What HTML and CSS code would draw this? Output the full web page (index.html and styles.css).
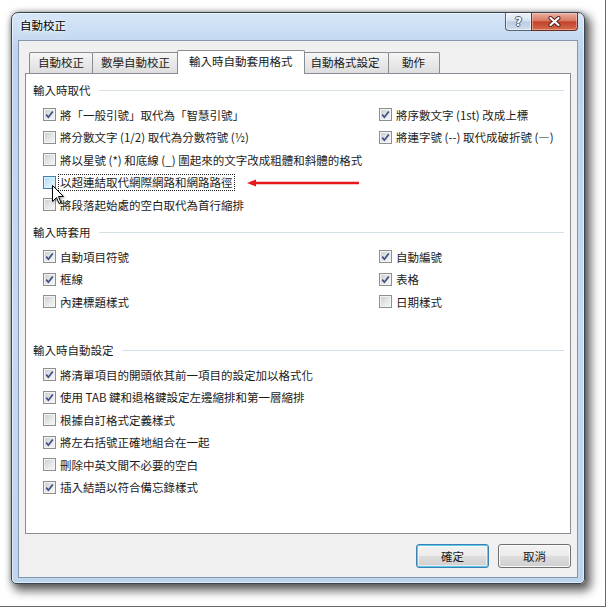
FILE: index.html
```html
<!DOCTYPE html>
<html lang="zh-Hant">
<head>
  <meta charset="UTF-8">
  <title>自動校正</title>
  <link rel="stylesheet" href="styles.css">
</head>
<body>

<div class="shot">
  <div class="window">
    <div class="titlebar">
      <span class="title">自動校正</span>
      <div class="caption">
        <span class="cap-btn help">?</span>
        <span class="cap-btn close">
          <svg width="13" height="11" viewBox="0 0 13 11">
            <path d="M2.5 2 L10.5 9 M10.5 2 L2.5 9" stroke="#4a2018" stroke-width="4" stroke-linecap="round"/>
            <path d="M2.5 2 L10.5 9 M10.5 2 L2.5 9" stroke="#fff" stroke-width="2.2" stroke-linecap="round"/>
          </svg>
        </span>
      </div>
    </div>

    <div class="client">
      <div class="tabs">
        <span class="tab">自動校正</span>
        <span class="tab">數學自動校正</span>
        <span class="tab active">輸入時自動套用格式</span>
        <span class="tab">自動格式設定</span>
        <span class="tab">動作</span>
      </div>

      <div class="panel">
        <div class="section">
          <div class="section-head"><span>輸入時取代</span></div>
          <div class="options">
            <label class="opt"><span class="cb on"><svg width="11" height="11" viewBox="0 0 11 11"><path d="M2.2 5.6 L4.4 8.2 L8.8 2.4" fill="none" stroke="#3d4f86" stroke-width="1.7"/></svg></span>將「一般引號」取代為「智慧引號」</label>
            <label class="opt"><span class="cb on"><svg width="11" height="11" viewBox="0 0 11 11"><path d="M2.2 5.6 L4.4 8.2 L8.8 2.4" fill="none" stroke="#3d4f86" stroke-width="1.7"/></svg></span>將序數文字 (1st) 改成上標</label>
            <label class="opt"><span class="cb"></span>將分數文字 (1/2) 取代為分數符號 (½)</label>
            <label class="opt"><span class="cb on"><svg width="11" height="11" viewBox="0 0 11 11"><path d="M2.2 5.6 L4.4 8.2 L8.8 2.4" fill="none" stroke="#3d4f86" stroke-width="1.7"/></svg></span>將連字號 (--) 取代成破折號 (—)</label>
            <label class="opt wide"><span class="cb"></span>將以星號 (*) 和底線 (_) 圍起來的文字改成粗體和斜體的格式</label>
            <label class="opt wide"><span class="cb hover"></span><span class="focus">以超連結取代網際網路和網路路徑</span></label>
            <label class="opt wide"><span class="cb"></span>將段落起始處的空白取代為首行縮排</label>
          </div>
        </div>

        <div class="section">
          <div class="section-head"><span>輸入時套用</span></div>
          <div class="options">
            <label class="opt"><span class="cb on"><svg width="11" height="11" viewBox="0 0 11 11"><path d="M2.2 5.6 L4.4 8.2 L8.8 2.4" fill="none" stroke="#3d4f86" stroke-width="1.7"/></svg></span>自動項目符號</label>
            <label class="opt"><span class="cb on"><svg width="11" height="11" viewBox="0 0 11 11"><path d="M2.2 5.6 L4.4 8.2 L8.8 2.4" fill="none" stroke="#3d4f86" stroke-width="1.7"/></svg></span>自動編號</label>
            <label class="opt"><span class="cb on"><svg width="11" height="11" viewBox="0 0 11 11"><path d="M2.2 5.6 L4.4 8.2 L8.8 2.4" fill="none" stroke="#3d4f86" stroke-width="1.7"/></svg></span>框線</label>
            <label class="opt"><span class="cb on"><svg width="11" height="11" viewBox="0 0 11 11"><path d="M2.2 5.6 L4.4 8.2 L8.8 2.4" fill="none" stroke="#3d4f86" stroke-width="1.7"/></svg></span>表格</label>
            <label class="opt"><span class="cb"></span>內建標題樣式</label>
            <label class="opt"><span class="cb"></span>日期樣式</label>
          </div>
        </div>

        <div class="section later">
          <div class="section-head"><span>輸入時自動設定</span></div>
          <div class="options">
            <label class="opt wide"><span class="cb on"><svg width="11" height="11" viewBox="0 0 11 11"><path d="M2.2 5.6 L4.4 8.2 L8.8 2.4" fill="none" stroke="#3d4f86" stroke-width="1.7"/></svg></span>將清單項目的開頭依其前一項目的設定加以格式化</label>
            <label class="opt wide"><span class="cb on"><svg width="11" height="11" viewBox="0 0 11 11"><path d="M2.2 5.6 L4.4 8.2 L8.8 2.4" fill="none" stroke="#3d4f86" stroke-width="1.7"/></svg></span>使用 TAB 鍵和退格鍵設定左邊縮排和第一層縮排</label>
            <label class="opt wide"><span class="cb"></span>根據自訂格式定義樣式</label>
            <label class="opt wide"><span class="cb on"><svg width="11" height="11" viewBox="0 0 11 11"><path d="M2.2 5.6 L4.4 8.2 L8.8 2.4" fill="none" stroke="#3d4f86" stroke-width="1.7"/></svg></span>將左右括號正確地組合在一起</label>
            <label class="opt wide"><span class="cb"></span>刪除中英文間不必要的空白</label>
            <label class="opt wide"><span class="cb on"><svg width="11" height="11" viewBox="0 0 11 11"><path d="M2.2 5.6 L4.4 8.2 L8.8 2.4" fill="none" stroke="#3d4f86" stroke-width="1.7"/></svg></span>插入結語以符合備忘錄樣式</label>
          </div>
        </div>
      </div>

      <div class="btn-row">
        <button class="btn default">確定</button>
        <button class="btn">取消</button>
      </div>
    </div>
  </div>

  <!-- annotation: red arrow -->
  <svg class="arrow" width="116" height="10" viewBox="0 0 116 10">
    <polygon points="1,5 10,1.5 10,8.5" fill="#e8161d"/>
    <line x1="9" y1="5" x2="113" y2="5" stroke="#e8161d" stroke-width="2.4"/>
  </svg>

  <!-- mouse pointer -->
  <svg class="pointer" width="13" height="20" viewBox="0 0 13 20">
    <path d="M0.5 0.5 V16.5 L4.5 12.5 L7 18.5 L9 17.5 L6.5 11.5 H11.5 Z" fill="#fff" stroke="#000" stroke-width="1" stroke-linejoin="miter"/>
  </svg>
</div>

</body>
</html>
```

FILE: styles.css
```css
* {
  margin: 0;
  padding: 0;
  box-sizing: border-box;
}

body {
  width: 609px;
  height: 609px;
  overflow: hidden;
  background-color: #fff;
  font-family: "Noto Sans CJK TC", "Noto Sans", sans-serif;
  font-size: 11.5px;
  color: #1b1b1b;
}

/* picture frame with its own edge line */
.shot {
  position: relative;
  width: 606px;
  height: 607px;
  padding: 12px 0 0 11px;
  border-right: 1px solid #6a6a6a;
  border-bottom: 1px solid #6a6a6a;
}

/* Aero window */
.window {
  width: 574px;
  height: 572px;
  border: 1px solid #3b4552;
  border-radius: 7px 7px 5px 5px;
  background: linear-gradient(180deg, #d6e6f7 0%, #bcd4ee 7%, #c6dbf1 55%, #bed5ee 100%);
  box-shadow: inset 0 0 0 1px rgba(255, 255, 255, 0.55), 4px 5px 10px 2px rgba(0, 0, 0, 0.6), 0 0 5px rgba(0, 0, 0, 0.3);
  display: flex;
  flex-direction: column;
  align-items: center;
}

.titlebar {
  width: 100%;
  height: 27px;
  display: flex;
  align-items: flex-start;
  padding: 0 6px 0 8px;
}

.title {
  line-height: 24px;
  color: #000;
  text-shadow: 0 0 6px #fff, 0 0 3px #fff;
}

.caption {
  margin-left: auto;
  display: flex;
}

.cap-btn {
  height: 18px;
  display: flex;
  align-items: center;
  justify-content: center;
  border: 1px solid rgba(40, 52, 70, 0.75);
  border-top: none;
}

.help {
  width: 26px;
  border-right: none;
  border-radius: 0 0 0 4px;
  background: linear-gradient(180deg, #eef3f9 0%, #d8e3ef 45%, #bccde1 52%, #cfdced 100%);
  box-shadow: inset 0 0 0 1px rgba(255, 255, 255, 0.6);
  font-family: "DejaVu Sans", sans-serif;
  font-weight: bold;
  font-size: 12px;
  color: #fff;
  text-shadow: -1px 0 #4c5a6c, 1px 0 #4c5a6c, 0 -1px #4c5a6c, 0 1px #4c5a6c;
}

.close {
  width: 47px;
  border-color: #6a2b22;
  border-radius: 0 0 4px 0;
  background: linear-gradient(180deg, #eab0a2 0%, #da7a63 45%, #c4432d 52%, #d36a4c 100%);
  box-shadow: inset 0 0 0 1px rgba(255, 220, 210, 0.45);
}

/* dialog client area */
.client {
  width: 560px;
  height: 538px;
  background-color: #f0f0f0;
  border: 1px solid #8597ae;
  padding: 9px 6px 9px 6px;
  display: flex;
  flex-direction: column;
}

.tabs {
  height: 23px;
  display: flex;
  align-items: flex-end;
  padding-left: 4px;
}

.tab {
  height: 21px;
  line-height: 19px;
  padding: 0 8px;
  min-width: 52px;
  text-align: center;
  border: 1px solid #898c95;
  border-bottom: none;
  border-radius: 2px 2px 0 0;
  background: linear-gradient(180deg, #f5f5f5 0%, #e9e9e9 50%, #dedede 100%);
  white-space: nowrap;
}

.tab + .tab {
  margin-left: -1px;
}

.tab.active {
  position: relative;
  z-index: 2;
  height: 24px;
  line-height: 21px;
  margin: 0 -2px -1px -2px;
  padding: 0 11px;
  background: #fff;
}

.panel {
  height: 461px;
  background-color: #fff;
  border: 1px solid #898c95;
  padding: 7px 6px 0 7px;
}

.section + .section {
  margin-top: 7px;
}

.section.later {
  margin-top: 28px;
}

.section-head {
  height: 18px;
  display: flex;
  align-items: center;
  gap: 8px;
}

.section-head::after {
  content: "";
  flex: 1;
  height: 1px;
  background-color: #d5dfe6;
}

.options {
  margin-top: 4.5px;
  padding-left: 10px;
  display: grid;
  grid-template-columns: 336px 1fr;
  grid-auto-rows: 22.5px;
}

.opt {
  display: flex;
  align-items: center;
  gap: 4px;
  white-space: nowrap;
}

.opt.wide {
  grid-column: 1 / -1;
}

/* Win7 style checkbox */
.cb {
  width: 13px;
  height: 13px;
  flex-shrink: 0;
  display: flex;
  align-items: center;
  justify-content: center;
  border: 1px solid #8e8f8f;
  background: linear-gradient(135deg, #c9cbcf 0%, #e6e7e8 55%, #f8f8f8 100%);
  box-shadow: inset 0 0 0 1px #f4f4f4;
}

.cb.hover {
  border-color: #3c7fb1;
  background: linear-gradient(135deg, #a9d9f8 0%, #d3eefc 60%, #eaf7fe 100%);
  box-shadow: inset 0 0 0 1px #def2fc;
}

.focus {
  margin-left: -2px;
  padding: 0 1px;
  line-height: 15px;
  border: 1px dotted #222;
}

.btn-row {
  margin-top: 10px;
  display: flex;
  justify-content: flex-end;
  gap: 9px;
}

.btn {
  width: 73px;
  height: 24px;
  font-family: inherit;
  font-size: 11.5px;
  color: #1b1b1b;
  border: 1px solid #707070;
  border-radius: 3px;
  background: linear-gradient(180deg, #f3f3f3 0%, #ebebeb 50%, #dddddd 52%, #cfcfcf 100%);
  box-shadow: inset 0 0 0 1px #fbfbfb;
}

.btn.default {
  border-color: #3c7fb1;
  box-shadow: inset 0 0 0 1px #5ecbf3, inset 0 0 0 2px rgba(255, 255, 255, 0.5);
}

/* overlays drawn on top of the screenshot */
.arrow {
  position: absolute;
  left: 246px;
  top: 178px;
}

.pointer {
  position: absolute;
  left: 52px;
  top: 185px;
  filter: drop-shadow(1px 1px 1px rgba(0, 0, 0, 0.35));
}
```
